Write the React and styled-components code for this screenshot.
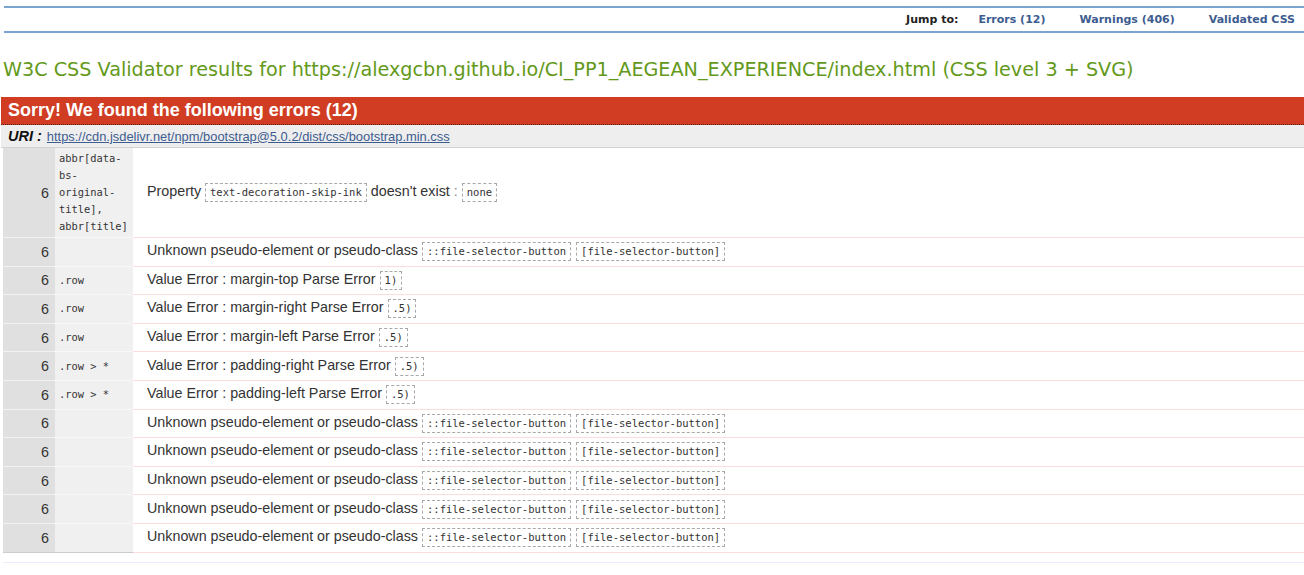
import React from "react";
import styled, { createGlobalStyle } from "styled-components";

const Global = createGlobalStyle`
  html, body { margin: 0; padding: 0; background: #fff; }
  body { font-family: "Liberation Sans", Arial, sans-serif; color: #333; }
`;

const Page = styled.div`
  width: 1304px;
  padding-top: 6px;
`;

const JumpBar = styled.nav`
  margin-left: 4px;
  height: 23px;
  border-top: 2px solid #7ba3cf;
  border-bottom: 2px solid #7ba3cf;
  display: flex;
  justify-content: flex-end;
  align-items: center;
  gap: 34px;
  padding-right: 9px;
  font-family: "DejaVu Sans", Verdana, sans-serif;
  font-size: 11px;
  font-weight: bold;
`;

const JumpLabel = styled.span`
  color: #222;
  margin-right: -14px;
`;

const JumpLink = styled.a`
  color: #3d5c8f;
  text-decoration: none;
`;

const Title = styled.h2`
  margin: 24px 0 0 3px;
  font-family: "DejaVu Sans", Verdana, sans-serif;
  font-weight: normal;
  font-size: 19.2px;
  line-height: 26px;
  color: #63991a;
  white-space: nowrap;
`;

const ErrorBox = styled.section`
  margin: 14px 0 0 1px;
`;

const ErrorHeader = styled.h3`
  margin: 0;
  height: 27px;
  background: #d13d23;
  color: #fff;
  font-family: "Liberation Sans", Arial, sans-serif;
  font-weight: bold;
  font-size: 18px;
  line-height: 27px;
  padding-left: 7px;
  border-bottom: 1px dotted #5a2016;
`;

const UriRow = styled.div`
  height: 22px;
  background: #eeeeee;
  border-bottom: 1px solid #d2d2d2;
  display: flex;
  align-items: center;
  gap: 5px;
  padding-left: 7px;
  font-size: 12.9px;
`;

const UriLabel = styled.span`
  font-weight: bold;
  font-style: italic;
  font-size: 14.5px;
  color: #111;
`;

const UriLink = styled.a`
  color: #3d5c8f;
  text-decoration: underline;
`;

const Table = styled.table`
  margin-left: 2px;
  width: 1302px;
  border-collapse: collapse;
`;

const Row = styled.tr`
  height: ${(p) => (p.$tall ? "auto" : "28.6px")};
`;

const LineCell = styled.td`
  width: 46px;
  background: #e0e0e0;
  text-align: right;
  padding: 0 6px 0 0;
  font-size: 14.3px;
  color: #333;
  border-bottom: 1px solid ${(p) => (p.$last ? "#cccccc" : "#f2f2f2")};
`;

const ContextCell = styled.td`
  width: 70px;
  background: #f0f0f0;
  padding: 2px 4px;
  font-family: "DejaVu Sans Mono", Consolas, monospace;
  font-size: 10.4px;
  line-height: 17px;
  color: #333;
  border-bottom: 1px solid ${(p) => (p.$last ? "#cccccc" : "#f7f7f7")};
`;

const MessageCell = styled.td`
  padding: 0 0 0 14px;
  font-size: 14.3px;
  line-height: 17px;
  color: #333;
  border-bottom: 1px solid #fcdcdc;
  white-space: nowrap;
`;

const Code = styled.code`
  display: inline-block;
  font-family: "DejaVu Sans Mono", Consolas, monospace;
  font-size: 10.5px;
  line-height: 15px;
  color: #333;
  border: 1px dashed #a8a8a8;
  padding: 1px 4px;
  margin-left: ${(p) => (p.$pair ? "5px" : "4px")};
  vertical-align: middle;
`;

const Sep = styled.span`
  color: #888;
  margin-left: 4px;
`;

const EndRule = styled.div`
  margin: 9px 0 0 2px;
  border-top: 1px solid #ebebfb;
`;

const ContextText = styled.span`
  display: block;
  white-space: pre-line;
`;

const fsb = (
  <>
    Unknown pseudo-element or pseudo-class<Code>::file-selector-button</Code>
    <Code $pair>[file-selector-button]</Code>
  </>
);

const rows = [
  {
    ctx: "abbr[data-\nbs-\noriginal-\ntitle],\nabbr[title]",
    tall: true,
    msg: (
      <>
        Property<Code>text-decoration-skip-ink</Code> doesn't exist<Sep>:</Sep>
        <Code>none</Code>
      </>
    ),
  },
  { ctx: "", msg: fsb },
  { ctx: ".row", msg: <>Value Error : margin-top Parse Error<Code>1)</Code></> },
  { ctx: ".row", msg: <>Value Error : margin-right Parse Error<Code>.5)</Code></> },
  { ctx: ".row", msg: <>Value Error : margin-left Parse Error<Code>.5)</Code></> },
  { ctx: ".row > *", msg: <>Value Error : padding-right Parse Error<Code>.5)</Code></> },
  { ctx: ".row > *", msg: <>Value Error : padding-left Parse Error<Code>.5)</Code></> },
  { ctx: "", msg: fsb },
  { ctx: "", msg: fsb },
  { ctx: "", msg: fsb },
  { ctx: "", msg: fsb },
  { ctx: "", msg: fsb },
];

export default function App() {
  return (
    <>
      <Global />
      <Page>
        <JumpBar>
          <JumpLabel>Jump to:</JumpLabel>
          <JumpLink href="#errors">Errors (12)</JumpLink>
          <JumpLink href="#warnings">Warnings (406)</JumpLink>
          <JumpLink href="#css">Validated CSS</JumpLink>
        </JumpBar>
        <Title>
          W3C CSS Validator results for
          https://alexgcbn.github.io/CI_PP1_AEGEAN_EXPERIENCE/index.html (CSS
          level 3 + SVG)
        </Title>
        <ErrorBox>
          <ErrorHeader>Sorry! We found the following errors (12)</ErrorHeader>
          <UriRow>
            <UriLabel>URI :</UriLabel>
            <UriLink href="#uri">
              https://cdn.jsdelivr.net/npm/bootstrap@5.0.2/dist/css/bootstrap.min.css
            </UriLink>
          </UriRow>
          <Table>
            <tbody>
              {rows.map((r, i) => {
                const last = i === rows.length - 1;
                return (
                  <Row key={i} $tall={r.tall}>
                    <LineCell $last={last}>6</LineCell>
                    <ContextCell $last={last}>
                      <ContextText>{r.ctx}</ContextText>
                    </ContextCell>
                    <MessageCell>{r.msg}</MessageCell>
                  </Row>
                );
              })}
            </tbody>
          </Table>
          <EndRule />
        </ErrorBox>
      </Page>
    </>
  );
}
